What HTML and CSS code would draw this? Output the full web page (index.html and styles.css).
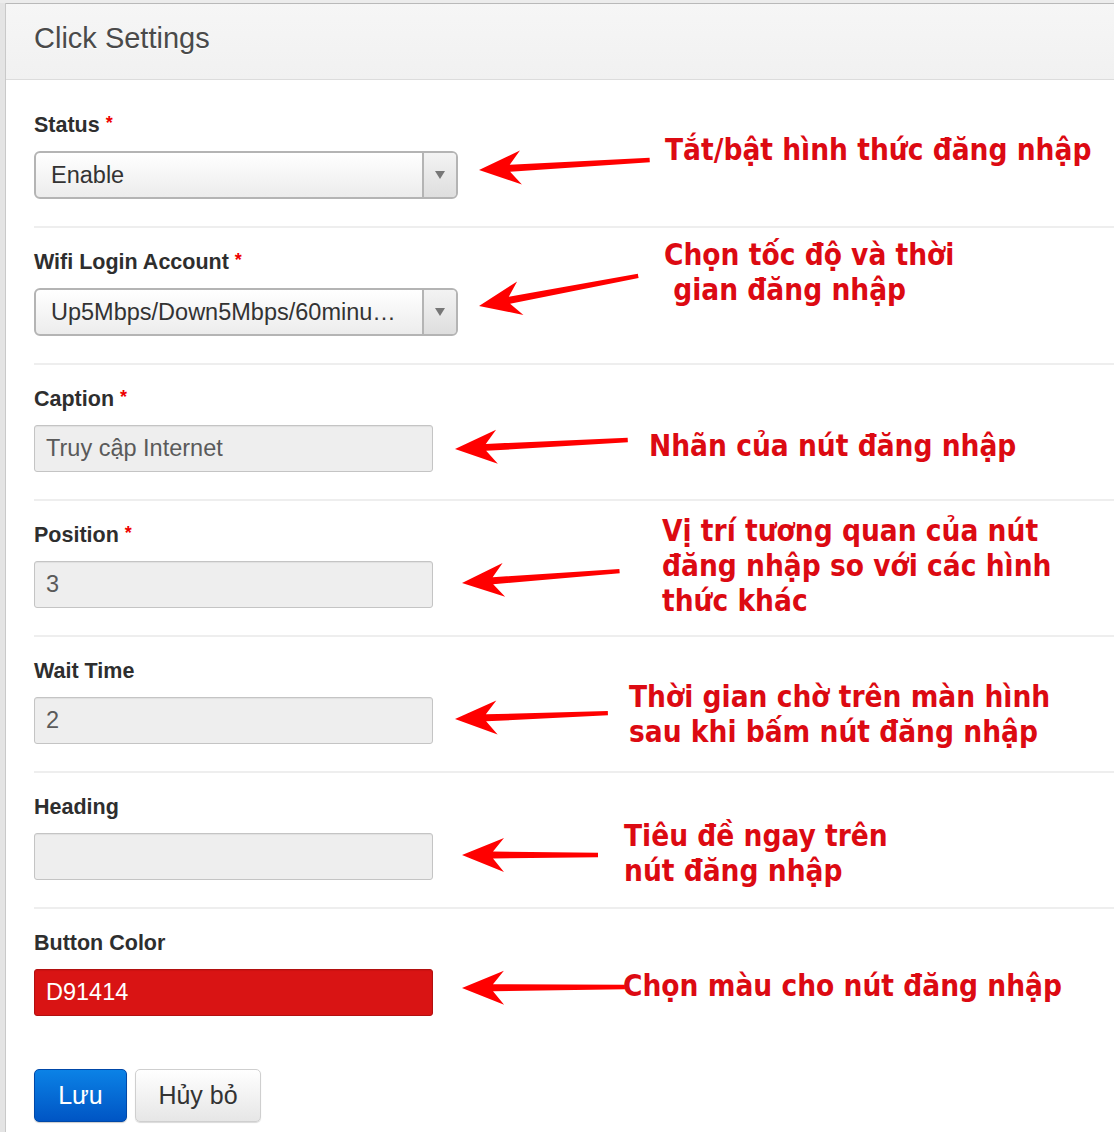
FILE: index.html
```html
<!DOCTYPE html>
<html lang="vi">
<head>
<meta charset="utf-8">
<title>Click Settings</title>
<link rel="stylesheet" href="styles.css">
</head>
<body>
<div class="page">
  <div class="edge"></div>
  <div class="panel">
    <div class="panel-head"><h1 class="title">Click Settings</h1></div>
    <form class="form">
      <div class="field">
        <label class="label">Status <span class="req">*</span></label>
        <div class="select"><span class="select-text">Enable</span><span class="select-btn"><span class="caret"></span></span></div>
      </div>
      <div class="field">
        <label class="label">Wifi Login Account <span class="req">*</span></label>
        <div class="select"><span class="select-text">Up5Mbps/Down5Mbps/60minu…</span><span class="select-btn"><span class="caret"></span></span></div>
      </div>
      <div class="field">
        <label class="label">Caption <span class="req">*</span></label>
        <div class="input">Truy cập Internet</div>
      </div>
      <div class="field">
        <label class="label">Position <span class="req">*</span></label>
        <div class="input">3</div>
      </div>
      <div class="field">
        <label class="label">Wait Time</label>
        <div class="input">2</div>
      </div>
      <div class="field">
        <label class="label">Heading</label>
        <div class="input"></div>
      </div>
      <div class="field field-last">
        <label class="label">Button Color</label>
        <div class="input input-color">D91414</div>
      </div>
      <div class="actions">
        <button type="button" class="btn btn-primary">Lưu</button>
        <button type="button" class="btn btn-default">Hủy bỏ</button>
      </div>
    </form>
  </div>
</div>

<div class="notes">
  <svg class="arrows" width="1114" height="1132" viewBox="0 0 1114 1132">
    <g fill="#ff0000">
      <g transform="translate(479,170) rotate(-3.35)"><polygon points="0,0 42,-17 31,-3.5 171,-2.2 171,2.2 31,3.5 42,17"/></g>
      <g transform="translate(479,306) rotate(-10.7)"><polygon points="0,0 42,-17 31,-3.5 162,-2.2 162,2.2 31,3.5 42,17"/></g>
      <g transform="translate(455,449) rotate(-3.0)"><polygon points="0,0 42,-17 31,-3.5 173,-2.2 173,2.2 31,3.5 42,17"/></g>
      <g transform="translate(462,583) rotate(-4.3)"><polygon points="0,0 42,-17 31,-3.5 158,-2.2 158,2.2 31,3.5 42,17"/></g>
      <g transform="translate(455,719) rotate(-2.2)"><polygon points="0,0 42,-17 31,-3.5 153,-2.2 153,2.2 31,3.5 42,17"/></g>
      <g transform="translate(462,855)"><polygon points="0,0 42,-17 31,-3.5 136,-2.2 136,2.2 31,3.5 42,17"/></g>
      <g transform="translate(462,988) rotate(-0.35)"><polygon points="0,0 42,-17 31,-3.5 163,-2.2 163,2.2 31,3.5 42,17"/></g>
    </g>
  </svg>
  <div class="note n1">Tắt/bật hình thức đăng nhập</div>
  <div class="note n2">Chọn tốc độ và thời<br>&nbsp;gian đăng nhập</div>
  <div class="note n3">Nhãn của nút đăng nhập</div>
  <div class="note n4">Vị trí tương quan của nút<br>đăng nhập so với các hình<br>thức khác</div>
  <div class="note n5">Thời gian chờ trên màn hình<br>sau khi bấm nút đăng nhập</div>
  <div class="note n6">Tiêu đề ngay trên<br>nút đăng nhập</div>
  <div class="note n7">Chọn màu cho nút đăng nhập</div>
</div>
</body>
</html>
```

FILE: styles.css
```css
html, body {
  margin: 0;
  padding: 0;
  background: #ffffff;
}
body {
  font-family: "Liberation Sans", Arial, sans-serif;
  color: #333333;
  width: 1114px;
  height: 1132px;
  overflow: hidden;
  position: relative;
}
.page {
  display: flex;
  min-height: 1132px;
  border-top: 3px solid #ececec;
}
.edge {
  width: 5px;
  flex: none;
  background: #e4e4e4;
  border-right: 1px solid #c9c9c9;
}
.panel {
  flex: 1;
  border-top: 1px solid #b9b9b9;
}
.panel-head {
  height: 75px;
  background: linear-gradient(#f6f6f6, #f1f1f1);
  border-bottom: 1px solid #dcdcdc;
  padding-left: 28px;
  display: flex;
  align-items: center;
}
.title {
  margin: 0;
  font-weight: normal;
  font-size: 29px;
  color: #4a4a4a;
  text-shadow: 0 1px 0 #ffffff;
  padding-bottom: 6px;
}
.form {
  padding-left: 28px;
}
.field {
  padding: 22px 0 27px;
  border-bottom: 2px solid #eeeeee;
  display: flex;
  flex-direction: column;
  align-items: flex-start;
}
.field:first-child {
  padding-top: 33px;
}
.field-last {
  border-bottom: none;
}
.label {
  display: block;
  height: 24px;
  font-size: 21.5px;
  font-weight: bold;
  line-height: 24px;
  color: #2e2e2e;
  margin-bottom: 14px;
}
.req {
  color: #ee0000;
  font-size: 18px;
  line-height: 0;
  vertical-align: 3px;
}
.select {
  width: 424px;
  height: 48px;
  box-sizing: border-box;
  border: 2px solid #b4b4b4;
  border-radius: 6px;
  background: linear-gradient(#ffffff, #ececec);
  display: flex;
  align-items: stretch;
  overflow: hidden;
}
.select-text {
  flex: 1;
  padding-left: 15px;
  display: flex;
  align-items: center;
  font-size: 23.5px;
  color: #333333;
  white-space: nowrap;
}
.select-btn {
  width: 32px;
  border-left: 2px solid #b4b4b4;
  background: linear-gradient(#f3f3f3, #dedede);
  display: flex;
  align-items: center;
  justify-content: center;
}
.caret {
  width: 0;
  height: 0;
  border-left: 5px solid transparent;
  border-right: 5px solid transparent;
  border-top: 8px solid #777777;
}
.input {
  width: 399px;
  height: 47px;
  box-sizing: border-box;
  border: 1px solid #c4c4c4;
  border-radius: 3px;
  background: #eeeeee;
  box-shadow: inset 0 1px 1px rgba(0,0,0,0.06);
  padding-left: 11px;
  display: flex;
  align-items: center;
  font-size: 23.5px;
  color: #5a5a5a;
}
.input-color {
  background: #d91414;
  border-color: #b21010;
  color: #ffffff;
}
.actions {
  padding-top: 26px;
  display: flex;
  gap: 8px;
}
.btn {
  height: 53px;
  border-radius: 5px;
  font-family: "Liberation Sans", Arial, sans-serif;
  font-size: 25px;
  padding: 0 20px;
  margin: 0;
  cursor: pointer;
}
.btn-primary {
  width: 93px;
  color: #ffffff;
  background: linear-gradient(#0b82e6, #0055c4);
  border: 1px solid #0048a8;
  box-shadow: 0 1px 1px rgba(0,0,0,0.2);
}
.btn-default {
  width: 126px;
  color: #333333;
  background: linear-gradient(#ffffff, #e6e6e6);
  border: 1px solid #cfcfcf;
  box-shadow: 0 1px 1px rgba(0,0,0,0.15);
}

.notes {
  position: absolute;
  left: 0;
  top: 0;
  width: 1114px;
  height: 1132px;
  pointer-events: none;
}
.arrows {
  position: absolute;
  left: 0;
  top: 0;
}
.note {
  position: absolute;
  font-family: "DejaVu Sans Condensed", "DejaVu Sans", sans-serif;
  font-stretch: condensed;
  font-weight: bold;
  font-size: 29.5px;
  line-height: 35px;
  color: #dc0a12;
  white-space: nowrap;
}
.n1 { left: 665px; top: 133px; }
.n2 { left: 664px; top: 238px; }
.n3 { left: 649px; top: 429px; }
.n4 { left: 662px; top: 514px; }
.n5 { left: 629px; top: 680px; }
.n6 { left: 624px; top: 819px; }
.n7 { left: 623px; top: 969px; }
```
